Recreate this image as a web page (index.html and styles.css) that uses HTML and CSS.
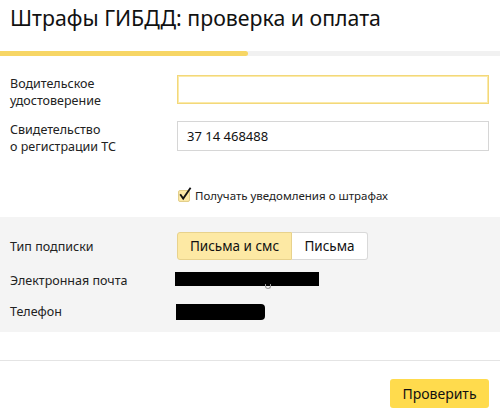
FILE: index.html
```html
<!DOCTYPE html>
<html lang="ru">
<head>
<meta charset="utf-8">
<link rel="stylesheet" href="styles.css">
</head>
<body>
<div class="page">
  <header class="header">
    <h1 class="title">Штрафы ГИБДД: проверка и оплата</h1>
  </header>
  <div class="progress"><div class="progress-fill"></div></div>

  <section class="form">
    <div class="row">
      <label class="label">Водительское<br>удостоверение</label>
      <div class="input input-focus"></div>
    </div>
    <div class="row">
      <label class="label">Свидетельство<br>о регистрации ТС</label>
      <div class="input">37 14 468488</div>
    </div>
    <div class="check-row">
      <span class="checkbox">
        <svg class="checkmark" width="14" height="14" viewBox="0 0 14 14"><path d="M2.2 7.2 L5.2 11.6 L12.6 0.8" fill="none" stroke="#111" stroke-width="1.8" stroke-linejoin="miter"/></svg>
      </span>
      <span class="check-text">Получать уведомления о штрафах</span>
    </div>
  </section>

  <section class="subscribe">
    <div class="sub-row">
      <span class="label">Тип подписки</span>
      <div class="seg">
        <span class="seg-btn seg-active">Письма и смс</span>
        <span class="seg-btn">Письма</span>
      </div>
    </div>
    <div class="sub-row sub-row-email">
      <span class="label">Электронная почта</span>
      <span class="redact redact-email"><span class="at-peek"></span></span>
    </div>
    <div class="sub-row sub-row-phone">
      <span class="label">Телефон</span>
      <span class="redact redact-phone"></span>
    </div>
  </section>

  <footer class="footer">
    <button class="submit">Проверить</button>
  </footer>
</div>
</body>
</html>
```

FILE: styles.css
```css
html, body {
  margin: 0;
  padding: 0;
  background: #fff;
}
body {
  font-family: "Noto Sans", "Open Sans", sans-serif;
  color: #1a1a1a;
}
.page {
  width: 500px;
  height: 418px;
  overflow: hidden;
}
.header {
  height: 51px;
  padding: 0 10px;
  display: flex;
  align-items: flex-start;
}
.title {
  margin: 4px 0 0 0;
  font-size: 21.3px;
  line-height: 28px;
  font-weight: 400;
  color: #111;
}
.progress {
  height: 5px;
  background: #f1f1f1;
}
.progress-fill {
  width: 248px;
  height: 5px;
  background: #f7d665;
  border-radius: 0 3px 3px 0;
}
.form {
  padding: 19px 10px 0 10px;
  display: flex;
  flex-direction: column;
  gap: 12px;
}
.row {
  display: grid;
  grid-template-columns: 167px 312px;
  align-items: start;
}
.label {
  font-size: 12.5px;
  line-height: 17px;
  color: #222;
}
.input {
  box-sizing: border-box;
  height: 30px;
  border: 1px solid #d6d6d6;
  padding: 0 9px;
  font-size: 13px;
  line-height: 28px;
  color: #111;
}
.input-focus {
  height: 29px;
  border-color: #f3d87a;
  box-shadow: inset 0 0 0 1px #fbeaa9;
}
.check-row {
  margin-top: 21px;
  padding-left: 168px;
  display: flex;
  align-items: center;
  gap: 5px;
  height: 16px;
}
.checkbox {
  position: relative;
  box-sizing: border-box;
  width: 12px;
  height: 12px;
  background: #fbe8a6;
  border: 1px solid #e3cf8a;
  border-radius: 2px;
}
.checkmark {
  position: absolute;
  left: -1px;
  top: -4px;
}
.check-text {
  font-size: 11.5px;
  line-height: 16px;
  color: #222;
}
.subscribe {
  margin-top: 13px;
  background: #f4f4f4;
  padding: 15px 10px 10px 10px;
  height: 115px;
  box-sizing: border-box;
  display: flex;
  flex-direction: column;
}
.sub-row {
  display: grid;
  grid-template-columns: 167px auto;
  align-items: center;
  justify-content: start;
}
.seg {
  display: flex;
  height: 28px;
}
.seg-btn {
  box-sizing: border-box;
  height: 28px;
  border: 1px solid #d9d9d9;
  background: #fff;
  font-size: 13.5px;
  line-height: 26px;
  color: #111;
  text-align: center;
}
.seg-active {
  background: #fde9a4;
  border-color: #e8d28c;
  border-radius: 3px 0 0 3px;
  width: 115px;
}
.seg-btn:last-child {
  border-left: none;
  border-radius: 0 3px 3px 0;
  width: 76px;
}
.sub-row-email {
  margin-top: 12px;
  height: 17px;
}
.sub-row-phone {
  margin-top: 14px;
  height: 17px;
}
.redact {
  position: relative;
  display: block;
  background: #000;
}
.redact-email {
  width: 144px;
  height: 14px;
  margin-left: -2px;
  margin-top: -3px;
}
.at-peek {
  position: absolute;
  left: 90px;
  top: 12px;
  width: 6px;
  height: 5px;
  border: 1px solid #9a9a9a;
  border-top: none;
  border-radius: 0 0 4px 4px;
  box-sizing: border-box;
}
.redact-phone {
  width: 89px;
  height: 16px;
  margin-left: -1px;
  border-radius: 0 4px 4px 0;
}
.footer {
  margin-top: 28px;
  border-top: 1px solid #e4e4e4;
  padding: 18px 11px 0 0;
  display: flex;
  justify-content: flex-end;
}
.submit {
  width: 99px;
  height: 29px;
  border: none;
  border-radius: 3px;
  background: #ffdb4d;
  font-family: "Noto Sans", "Open Sans", sans-serif;
  font-size: 14px;
  color: #111;
  padding: 0;
}
```
